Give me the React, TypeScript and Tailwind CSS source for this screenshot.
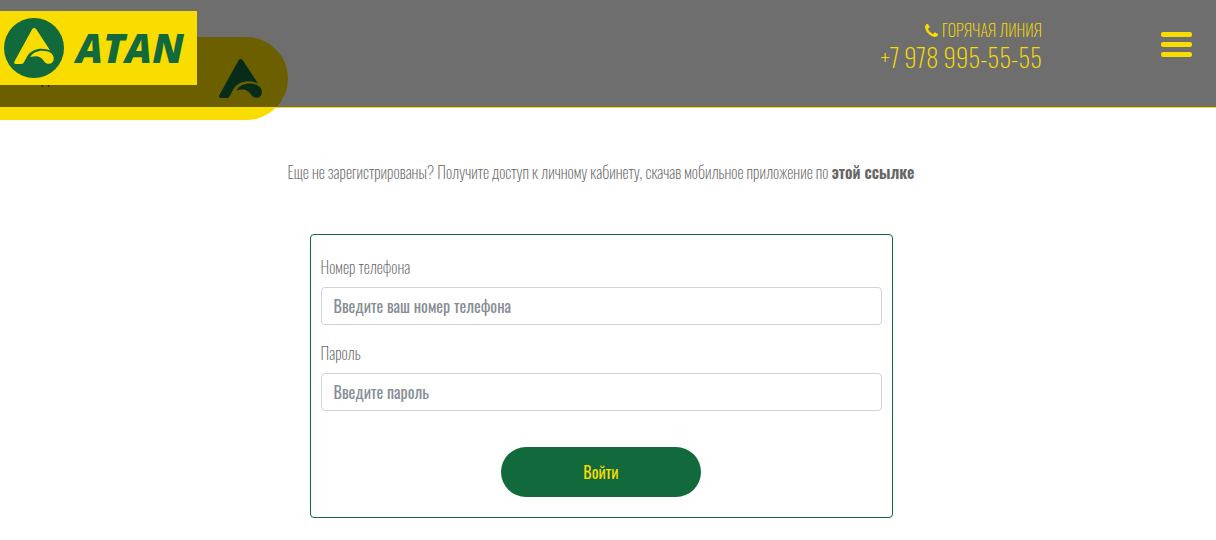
import { useState } from "react";

function Mark({ className }: { className: string }) {
  return (
    <svg viewBox="0 0 43 39" className={className} fill="currentColor" aria-hidden="true">
      <path d="M19.600 1.200Q21.700 -1.200 23.800 1.200L39 24.500C31 20.500 19.500 22 14.500 30L10.500 37.500Q9.800 39 8 39H1.700Q-.6 39 .3 36.300Z" />
      <path d="M17.500 31.500C20.500 25.500 28.500 23.500 35.500 25.200C42 26.500 43.600 31.500 42.600 35.200C41.200 39.600 35.300 40 32.800 36.600C29 30.500 24.500 29.500 17.500 31.500Z" />
    </svg>
  );
}

export default function App() {
  const [phone, setPhone] = useState("");
  const [password, setPassword] = useState("");

  return (
    <div className="relative bg-white font-['Oswald','Open_Sans_Condensed',sans-serif] text-base font-extralight text-[#666]">
      {/* Header over the page */}
      <header className="absolute inset-x-0 top-0 z-10 flex h-[108px] items-start justify-between border-b border-[#f9dc00] bg-black/57 bg-clip-padding pr-6 text-[#f9dc00]">
        <a href="/" className="mt-[11px] flex h-[74px] w-[197px] items-center gap-3 bg-[#f9dc00] pl-1 text-[#11693c]">
          <span className="flex size-[60px] shrink-0 items-center justify-center rounded-full bg-[#11693c] text-[#f9dc00]">
            <Mark className="mb-1 h-[36px] w-[40px]" />
          </span>
          <span className="font-['Open_Sans',sans-serif] text-[40px] leading-none font-extrabold italic">ATAN</span>
        </a>
        <div className="flex items-start gap-[119px]">
          <div className="mt-[18px] flex flex-col items-end">
            <div className="flex items-center gap-1 leading-6">
              <svg viewBox="0 0 1408 1408" className="size-[13px]" fill="currentColor" aria-hidden="true">
                <path d="M1408 1112q0 27-10 70.500t-21 68.500q-21 50-122 106-94 51-186 51-27 0-53-3.500t-57.500-12.500-47-14.500-55.500-20.500-49-18q-98-35-175-83-127-79-264-216t-216-264q-48-77-83-175-3-9-18-49t-20.500-55.500-14.500-47-12.500-57.500-3.500-53q0-92 51-186 56-101 106-122 25-11 68.500-21t70.500-10q14 0 21 3 18 6 53 76 11 19 30 54t35 63.500 31 53.500q3 4 17.500 25t21.500 35.500 7 28.500q0 20-28.500 50t-62 55-62 53-28.500 46q0 9 5 22.500t8.500 20.500 14 24 11.500 19q76 137 174 235t235 174q2 1 19 11.500t24 14 20.500 8.500 22.500 5q18 0 46-28.500t53-62 55-62 50-28.500q14 0 28.500 7t35.500 21.500 25 17.500q25 15 53.500 31t63.500 35 54 30q70 35 76 53 3 7 3 21z" />
              </svg>
              ГОРЯЧАЯ ЛИНИЯ
            </div>
            <a href="tel:+79789955555" className="text-[25px] leading-[30px]">+7 978 995-55-55</a>
          </div>
          <button type="button" aria-label="Меню" className="mt-8 flex w-[31px] flex-col gap-[5px]">
            <span className="h-[5px] w-full rounded-xs bg-[#f9dc00]" />
            <span className="h-[5px] w-full rounded-xs bg-[#f9dc00]" />
            <span className="h-[5px] w-full rounded-xs bg-[#f9dc00]" />
          </button>
        </div>
      </header>

      {/* Page title tab */}
      <div className="pt-[37px]">
        <div className="flex h-[83px] w-72 items-center justify-between rounded-r-full bg-[#f9dc00] pr-[26px] pl-5 text-[#11693c]">
          <h1 className="pb-1 text-base font-normal">Вход</h1>
          <Mark className="h-[39px] w-[43px]" />
        </div>
      </div>

      <main className="flex flex-col items-center pt-10 pr-[22px] pb-5 pl-2">
        <p className="mb-[50px] text-center leading-6">
          Еще не зарегистрированы? Получите доступ к личному кабинету, скачав мобильное приложение по{" "}
          <a href="#app" className="font-semibold">этой ссылке</a>
        </p>

        <form
          className="flex w-full max-w-[583px] flex-col rounded border border-[#11693c] px-[10px] py-5"
          onSubmit={(e) => e.preventDefault()}
        >
          <label htmlFor="phone" className="mb-2 leading-6">Номер телефона</label>
          <input
            id="phone"
            type="tel"
            value={phone}
            onChange={(e) => setPhone(e.target.value)}
            placeholder="Введите ваш номер телефона"
            className="mb-4 h-[38px] rounded border border-[#ced4da] px-3 font-normal placeholder:text-[#868e96]"
          />
          <label htmlFor="password" className="mb-2 leading-6">Пароль</label>
          <input
            id="password"
            type="password"
            value={password}
            onChange={(e) => setPassword(e.target.value)}
            placeholder="Введите пароль"
            className="h-[38px] rounded border border-[#ced4da] px-3 font-normal placeholder:text-[#868e96]"
          />
          <button type="submit" className="mt-9 h-[50px] w-[200px] self-center rounded-full bg-[#11693c] font-normal text-[#f9dc00]">
            Войти
          </button>
        </form>
      </main>
    </div>
  );
}
